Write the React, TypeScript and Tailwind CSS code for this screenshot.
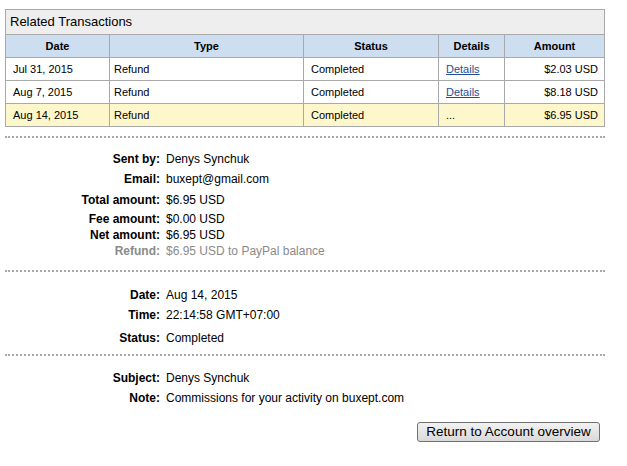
import React from "react";

const rows = [
  { date: "Jul 31, 2015", type: "Refund", status: "Completed", details: "link", amount: "$2.03 USD", hl: false },
  { date: "Aug 7, 2015", type: "Refund", status: "Completed", details: "link", amount: "$8.18 USD", hl: false },
  { date: "Aug 14, 2015", type: "Refund", status: "Completed", details: "...", amount: "$6.95 USD", hl: true },
];

function Row({ label, value, h, grey }: { label: string; value: string; h: string; grey?: boolean }) {
  return (
    <div className={`flex items-start ${h} text-[12px] leading-[19px] ${grey ? "text-[#8a8a8a]" : "text-black"}`}>
      <div className="w-[155px] text-right font-bold">{label}</div>
      <div className="ml-[6px]">{value}</div>
    </div>
  );
}

function Dots({ className }: { className: string }) {
  return <div className={`w-[600px] border-t-2 border-dotted border-[#a8a8a8] ${className}`} />;
}

export default function App() {
  return (
    <div className="w-[627px] h-[466px] bg-white pl-[5px] pt-[9px]" style={{ fontFamily: '"Liberation Sans", Arial, sans-serif' }}>
      <div className="w-[600px] border border-[#a9a9a9]">
        <div className="h-[25px] bg-[#eeeeee] border-b border-[#a9a9a9] pl-[4px] text-[13px] leading-[24px] text-black">
          Related Transactions
        </div>
        <div className="flex h-[23px] bg-[#cddef0] border-b border-[#a9a9a9] text-[11px] font-bold text-black leading-[22px]">
          <div className="w-[104px] border-r border-[#a9a9a9] text-center">Date</div>
          <div className="w-[194px] border-r border-[#a9a9a9] text-center">Type</div>
          <div className="w-[135px] border-r border-[#a9a9a9] text-center">Status</div>
          <div className="w-[66px] border-r border-[#a9a9a9] text-center">Details</div>
          <div className="w-[99px] text-center">Amount</div>
        </div>
        {rows.map((r, i) => (
          <div
            key={i}
            className={`flex text-[11px] leading-[22px] text-black ${i < rows.length - 1 ? "h-[23px] border-b border-[#a9a9a9]" : "h-[22px]"} ${r.hl ? "bg-[#fff7cc]" : "bg-white"}`}
          >
            <div className="w-[104px] border-r border-[#a9a9a9] pl-[7px]">{r.date}</div>
            <div className="w-[194px] border-r border-[#a9a9a9] pl-[4px]">{r.type}</div>
            <div className="w-[135px] border-r border-[#a9a9a9] pl-[7px]">{r.status}</div>
            <div className="w-[66px] border-r border-[#a9a9a9] pl-[7px]">
              {r.details === "link" ? (
                <a href="#" className="text-[#1f4e96] underline">Details</a>
              ) : (
                <span>...</span>
              )}
            </div>
            <div className="w-[99px] pr-[6px] text-right">{r.amount}</div>
          </div>
        ))}
      </div>

      <Dots className="mt-[9px]" />

      <div className="mt-[12px]">
        <Row label="Sent by:" value="Denys Synchuk" h="h-[20px]" />
        <Row label="Email:" value="buxept@gmail.com" h="h-[21px]" />
        <Row label="Total amount:" value="$6.95 USD" h="h-[19px]" />
        <Row label="Fee amount:" value="$0.00 USD" h="h-[16px]" />
        <Row label="Net amount:" value="$6.95 USD" h="h-[16px]" />
        <Row label="Refund:" value="$6.95 USD to PayPal balance" h="h-[16px]" grey />
      </div>

      <Dots className="mt-[12px]" />

      <div className="mt-[14px]">
        <Row label="Date:" value="Aug 14, 2015" h="h-[20px]" />
        <Row label="Time:" value="22:14:58 GMT+07:00" h="h-[23px]" />
        <Row label="Status:" value="Completed" h="h-[16px]" />
      </div>

      <Dots className="mt-[9px]" />

      <div className="mt-[13px]">
        <Row label="Subject:" value="Denys Synchuk" h="h-[20px]" />
        <Row label="Note:" value="Commissions for your activity on buxept.com" h="h-[16px]" />
      </div>

      <div className="w-[600px] flex justify-end mt-[17px]">
        <button className="mr-[5px] h-[20px] w-[183px] rounded-[3px] border border-[#707070] bg-gradient-to-b from-[#f2f2f2] to-[#d9d9d9] text-[13.5px] leading-[18px] text-black">
          Return to Account overview
        </button>
      </div>
    </div>
  );
}
